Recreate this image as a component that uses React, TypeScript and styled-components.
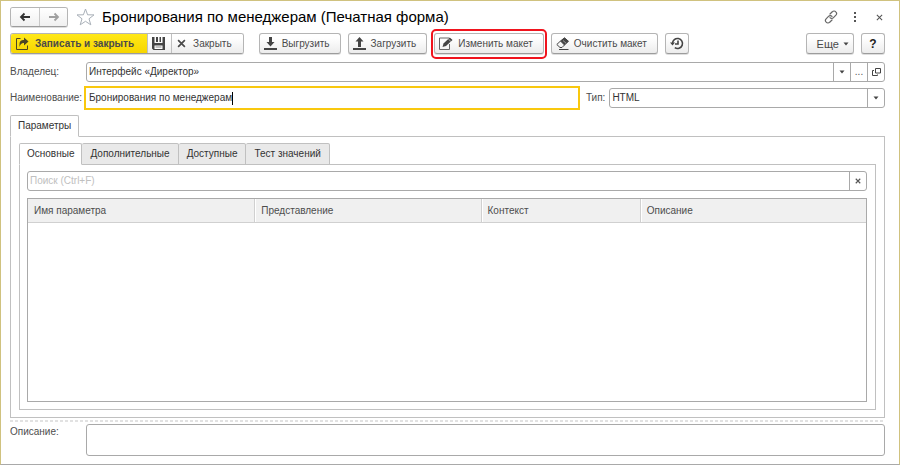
import React from 'react';
import styled, { createGlobalStyle, css } from 'styled-components';

const line = '#a9a9a9';
const soft = '#c0c0c0';

const GlobalStyle = createGlobalStyle`
  *, *::before, *::after { box-sizing: border-box; }
  body { margin: 0; background: #fff; color: #4a4a4a; }
  body, button, input, select, textarea {
    font-family: "Liberation Sans", Arial, sans-serif;
    font-size: 10px;
    line-height: 14px;
  }
  button, input, select, textarea { margin: 0; color: inherit; border-radius: 0; }
`;

const Window = styled.main`
  display: flex;
  flex-direction: column;
  min-height: 100vh;
  padding: 6px 14px 8px 9px;
  border: 1px solid #d0c27f;
  border-bottom-color: ${line};
`;

const TitleBar = styled.header`
  display: flex;
  align-items: center;
  height: 20px;
`;

const Title = styled.h1`
  flex: 1;
  margin: 0 0 0 7px;
  color: #000;
  font-size: 15px;
  font-weight: 400;
  line-height: 20px;
  white-space: nowrap;
`;

const Joined = styled.div`
  display: flex;
  border: 1px solid #b5b5b5;
  border-bottom-color: #9c9c9c;
  border-radius: 3px;
  box-shadow: 0 1px 0 #dedede;
  overflow: hidden;
`;

const NavButton = styled.button<{ $muted?: boolean }>`
  display: flex;
  align-items: center;
  justify-content: center;
  width: 28px;
  height: 18px;
  padding: 0;
  border: 0;
  background: linear-gradient(#fff, #f0f0f0);
  color: ${(p) => (p.$muted ? '#a0a0a0' : '#333')};
  & + & { border-left: 1px solid #c8c8c8; }
`;

const PlainButton = styled.button`
  display: flex;
  align-items: center;
  justify-content: center;
  padding: 0;
  border: 0;
  background: none;
  color: #555;
`;

const WindowActions = styled.div`
  display: flex;
  align-items: center;
  gap: 8px;
  margin-right: -2px;
  ${PlainButton} { width: 16px; height: 16px; }
`;

const Star = styled(PlainButton)`
  margin-left: 8px;
`;

const Toolbar = styled.div`
  display: flex;
  align-items: center;
  gap: 7px;
  height: 21px;
  margin-top: 6px;
`;

const buttonFace = css`
  display: flex;
  align-items: center;
  height: 21px;
  background: linear-gradient(#fff 20%, #ececec);
  white-space: nowrap;
`;

const Button = styled.button<{ $square?: boolean }>`
  ${buttonFace}
  gap: 5px;
  padding: 0 10px 0 4px;
  border: 1px solid #b5b5b5;
  border-bottom-color: #9c9c9c;
  border-radius: 3px;
  box-shadow: 0 1px 0 #dedede;
  ${(p) => p.$square && css`
    justify-content: center;
    width: 24px;
    padding: 0;
  `}
`;

const Segment = styled.button<{ $primary?: boolean; $icon?: boolean }>`
  ${buttonFace}
  height: 19px;
  gap: 7px;
  padding: 0 11px 0 5px;
  border: 0;
  & + & { border-left: 1px solid #c0c0c0; }
  ${(p) => p.$primary && css`
    gap: 6px;
    padding: 0 13px 0 5px;
    background: linear-gradient(#ffe818, #f7d600);
    font-weight: 700;
  `}
  ${(p) => p.$icon && css`
    width: 24px;
    padding: 0 4px;
  `}
`;

const MainGroup = styled(Joined)`
  margin-right: 8px;
`;

const Highlight = styled.div`
  position: relative;
  &::after {
    content: '';
    position: absolute;
    inset: -4px -3px -5px;
    border: 2px solid #f0141e;
    border-radius: 5px;
    pointer-events: none;
  }
`;

const Spacer = styled.div`
  flex: 1;
`;

const MoreButton = styled(Button)`
  gap: 4px;
  padding: 0 4px 0 10px;
  font-size: 11px;
`;

const HelpButton = styled(Button)`
  color: #222;
  font-size: 12px;
  font-weight: 700;
`;

const FormRow = styled.div<{ $top: number }>`
  display: flex;
  align-items: center;
  margin-top: ${(p) => p.$top}px;
`;

const Label = styled.label`
  flex: none;
  width: 76px;
  color: #4d4d4d;
  white-space: nowrap;
`;

const Field = styled.div`
  display: flex;
  flex: 1;
  height: 20px;
  border: 1px solid ${line};
  border-radius: 3px;
  overflow: hidden;
`;

const TextInput = styled.input`
  flex: 1;
  min-width: 0;
  padding: 0 2px;
  border: 0;
  outline: 0;
  background: none;
  color: #333;
  &::placeholder { color: #c0c0c0; opacity: 1; }
`;

const ActiveField = styled.div`
  display: flex;
  align-items: center;
  flex: 495;
  height: 24px;
  margin-left: -2px;
  padding-left: 3px;
  border: 2px solid #f9c80e;
  ${TextInput} {
    flex: none;
    field-sizing: content;
    padding: 0;
  }
`;

const Caret = styled.span`
  width: 1px;
  height: 13px;
  background: #000;
`;

const TypeLabel = styled(Label)`
  width: auto;
  margin: 0 4px 0 6px;
`;

const TypeField = styled(Field)`
  position: relative;
  flex: 277;
`;

const Select = styled.select`
  appearance: none;
  flex: 1;
  min-width: 0;
  padding: 0 2px;
  border: 0;
  outline: 0;
  background: none;
  color: #333;
`;

const FieldButton = styled(PlainButton)`
  width: 17px;
  border-left: 1px solid ${line};
`;

const SelectArrow = styled.span`
  position: absolute;
  inset: 0 0 0 auto;
  display: flex;
  align-items: center;
  justify-content: center;
  width: 17px;
  border-left: 1px solid ${line};
  pointer-events: none;
`;

const Tabs = styled.div`
  display: flex;
  position: relative;
  margin-bottom: -1px;
`;

const Tab = styled.button<{ $active?: boolean }>`
  height: 22px;
  padding: 0 7px;
  border: 1px solid ${soft};
  border-bottom-color: ${(p) => (p.$active ? '#fff' : soft)};
  border-radius: 2px 2px 0 0;
  background: ${(p) => (p.$active ? '#fff' : '#e9e9e9')};
  color: #333;
  white-space: nowrap;
  & + & { border-left: 0; padding: 0 8px; }
`;

const Section = styled.section<{ $top: number }>`
  display: flex;
  flex: 1;
  flex-direction: column;
  margin-top: ${(p) => p.$top}px;
`;

const Panel = styled.div<{ $outer?: boolean }>`
  display: flex;
  flex: 1;
  flex-direction: column;
  padding: ${(p) => (p.$outer ? '0 8px 7px' : '6px 8px 7px 7px')};
  border: 1px solid ${soft};
`;

const SearchField = styled(Field)`
  flex: none;
`;

const TableFrame = styled.div`
  flex: 1;
  min-height: 120px;
  margin-top: 7px;
  border: 1px solid ${line};
`;

const Table = styled.table`
  width: 100%;
  table-layout: fixed;
  border-collapse: separate;
  border-spacing: 0;
`;

const HeadCell = styled.th<{ $share: number }>`
  width: ${(p) => p.$share}%;
  height: 24px;
  padding: 0 6px;
  border-bottom: 1px solid #d0d0d0;
  background: #f0f0f0;
  color: #4d4d4d;
  font-weight: 400;
  text-align: left;
  & + & { border-left: 1px solid #d0d0d0; box-shadow: inset 1px 0 0 #fff; }
`;

const Divider = styled.hr`
  width: 100%;
  height: 2px;
  margin: 2px 0;
  border: 0;
  background: repeating-linear-gradient(90deg, #e2e2e2 0 3px, #fff 3px 5px);
`;

const DescriptionRow = styled.div`
  display: flex;
  ${Label} { padding-top: 1px; }
`;

const TextArea = styled.textarea`
  flex: 1;
  height: 32px;
  padding: 3px;
  border: 1px solid ${line};
  border-radius: 3px;
  outline: 0;
  resize: none;
`;

const Arrow = () => (
  <svg width="6" height="4" viewBox="0 0 6 4" fill="#444" aria-hidden="true"><path d="M.5.5h5L3 3.5z" /></svg>
);

const NavArrow = ({ flip }: { flip?: boolean }) => (
  <svg width="12" height="10" viewBox="0 0 12 10" fill="none" stroke="currentColor" strokeWidth="1.800" aria-hidden="true">
    <path d={flip ? 'M1 5h9M6.500 1.500 10 5 6.500 8.500' : 'M11 5H2M5.500 1.500 2 5l3.500 3.500'} />
  </svg>
);

const Cross = ({ size, weight }: { size: number; weight: number }) => (
  <svg width={size} height={size} viewBox="0 0 8 8" stroke="currentColor" strokeWidth={weight} aria-hidden="true">
    <path d="m1 1 6 6M7 1 1 7" />
  </svg>
);

const StarIcon = () => (
  <svg width="19" height="18" viewBox="0 0 19 18" fill="#fff" stroke="#a9b0b8" aria-hidden="true">
    <path d="m9.500 1 2.100 5.800 6.400.1-5 3.900 1.800 6-5.300-3.500-5.300 3.500 1.800-6-5-3.900 6.400-.1z" />
  </svg>
);

const LinkIcon = () => (
  <svg width="14" height="14" viewBox="0 0 14 14" fill="none" stroke="#666" strokeWidth="1.200" strokeLinecap="round" aria-hidden="true">
    <path d="m6 4 2.300-2.200a2.300 2.300 0 0 1 3.500 0c1 1 1 2.400.1 3.400L9.500 7.600c-1 1-2.600 1-3.500 0M8 10l-2.300 2.200a2.300 2.300 0 0 1-3.500 0c-1-1-1-2.400-.1-3.400l2.400-2.400c1-1 2.600-1 3.500 0" />
  </svg>
);

const DotsIcon = () => (
  <svg width="3" height="10" viewBox="0 0 3 10" fill="#555" aria-hidden="true"><path d="M0 0h2v2H0zM0 4h2v2H0zM0 8h2v2H0z" /></svg>
);

const SaveCloseIcon = () => (
  <svg width="13" height="13" viewBox="0 0 13 13" fill="none" stroke="#4b4524" aria-hidden="true">
    <path d="M4.500 1.500H.5v11h11V8.500" />
    <path d="M3.500 10V7C3.500 4.500 5 3 7.500 3H8V.5L12.500 4.500 8 8.500V6H7.500C5.500 6 4.500 7 3.500 10z" fill="#4b4524" stroke="none" />
  </svg>
);

const DiskIcon = () => (
  <svg width="13" height="13" viewBox="0 0 13 13" aria-hidden="true">
    <path d="M0 0h2.500v6h8V0H13v13H1.500L0 11.500z" fill="#444" />
    <path d="M4 0h2v5H4zM7.500 0h1.500v5H7.500z" fill="#444" />
    <path d="M2.500 8.500h8V12h-8z" fill="#fff" />
    <path d="M3.500 9.500h6v1h-6z" fill="#888" />
  </svg>
);

const TransferIcon = ({ up }: { up?: boolean }) => (
  <svg width="13" height="13" viewBox="0 0 13 13" fill="#444" aria-hidden="true">
    <path d="M0 11h13v2H0z" />
    <path d={up ? 'M6.500 0 10.500 4.500H8V10H5V4.500H2.500z' : 'M5 0h3v5h2.500L6.500 9.500 2.500 5H5z'} />
  </svg>
);

const EditIcon = () => (
  <svg width="14" height="13" viewBox="0 0 14 13" aria-hidden="true">
    <path d="M10 1H.5v11.500h10V7" fill="none" stroke="#666" />
    <path d="m3.500 10 1-3.500L10.800.5 13.500 3 7 9z" fill="#444" />
    <path d="m9.300 2 2.600 2.400" stroke="#fff" strokeWidth=".6" />
  </svg>
);

const EraserIcon = () => (
  <svg width="13" height="13" viewBox="0 0 13 13" fill="none" stroke="#444" aria-hidden="true">
    <path d="M4.500 4 8.500.8l4 3.500L8.500 8z" fill="#444" />
    <path d="M4.500 4 .8 7.500 4 10.500h2L8.500 8M3 12.500h9.500" />
    <path d="m7 3.500 3 2.700" stroke="#fff" strokeWidth=".5" />
  </svg>
);

const HistoryIcon = () => (
  <svg width="14" height="13" viewBox="0 0 14 13" fill="none" stroke="#444" strokeWidth="1.600" aria-hidden="true">
    <path d="M2.500 6.500a5 5 0 1 1 2.300 4.200M8 3.500V7H5" />
    <path d="M0 5.500h5L2.500 8.500z" fill="#444" stroke="none" />
  </svg>
);

const OpenIcon = () => (
  <svg width="9" height="8" viewBox="0 0 9 8" fill="none" stroke="#444" aria-hidden="true">
    <path d="M3.500.5h5v4.500h-5zM2 2.500H.5v5h5V6.500" />
  </svg>
);

const columns = [
  { name: 'Имя параметра', share: 27 },
  { name: 'Представление', share: 27 },
  { name: 'Контекст', share: 19 },
  { name: 'Описание', share: 27 },
];

const innerTabs = ['Основные', 'Дополнительные', 'Доступные', 'Тест значений'];

export default function App() {
  return (
    <>
      <GlobalStyle />
      <Window>
        <TitleBar>
          <Joined>
            <NavButton aria-label="Назад"><NavArrow /></NavButton>
            <NavButton $muted aria-label="Вперед"><NavArrow flip /></NavButton>
          </Joined>
          <Star aria-label="В избранное"><StarIcon /></Star>
          <Title>Бронирования по менеджерам (Печатная форма)</Title>
          <WindowActions>
            <PlainButton aria-label="Ссылка"><LinkIcon /></PlainButton>
            <PlainButton aria-label="Меню"><DotsIcon /></PlainButton>
            <PlainButton aria-label="Закрыть окно"><Cross size={7} weight={1.2} /></PlainButton>
          </WindowActions>
        </TitleBar>

        <Toolbar>
          <MainGroup>
            <Segment $primary><SaveCloseIcon />Записать и закрыть</Segment>
            <Segment $icon aria-label="Записать"><DiskIcon /></Segment>
            <Segment><Cross size={9} weight={1.5} />Закрыть</Segment>
          </MainGroup>
          <Button><TransferIcon />Выгрузить</Button>
          <Button><TransferIcon up />Загрузить</Button>
          <Highlight><Button><EditIcon />Изменить макет</Button></Highlight>
          <Button><EraserIcon />Очистить макет</Button>
          <Button $square aria-label="История"><HistoryIcon /></Button>
          <Spacer />
          <MoreButton>Еще<Arrow /></MoreButton>
          <HelpButton $square>?</HelpButton>
        </Toolbar>

        <FormRow $top={8}>
          <Label htmlFor="owner">Владелец:</Label>
          <Field>
            <TextInput id="owner" defaultValue="Интерфейс «Директор»" />
            <FieldButton aria-label="Список"><Arrow /></FieldButton>
            <FieldButton aria-label="Выбрать">...</FieldButton>
            <FieldButton aria-label="Открыть"><OpenIcon /></FieldButton>
          </Field>
        </FormRow>

        <FormRow $top={4}>
          <Label htmlFor="name">Наименование:</Label>
          <ActiveField>
            <TextInput id="name" defaultValue="Бронирования по менеджерам" />
            <Caret />
          </ActiveField>
          <TypeLabel htmlFor="type">Тип:</TypeLabel>
          <TypeField>
            <Select id="type" defaultValue="HTML"><option>HTML</option></Select>
            <SelectArrow><Arrow /></SelectArrow>
          </TypeField>
        </FormRow>

        <Section $top={5}>
          <Tabs role="tablist">
            <Tab role="tab" aria-selected $active>Параметры</Tab>
          </Tabs>
          <Panel $outer>
            <Section $top={6}>
              <Tabs role="tablist">
                {innerTabs.map((name, i) => (
                  <Tab key={name} role="tab" aria-selected={i === 0} $active={i === 0}>{name}</Tab>
                ))}
              </Tabs>
              <Panel>
                <SearchField>
                  <TextInput type="text" aria-label="Поиск" placeholder="Поиск (Ctrl+F)" />
                  <FieldButton aria-label="Очистить"><Cross size={6} weight={1.5} /></FieldButton>
                </SearchField>
                <TableFrame>
                  <Table>
                    <thead>
                      <tr>
                        {columns.map((c) => (
                          <HeadCell key={c.name} $share={c.share} scope="col">{c.name}</HeadCell>
                        ))}
                      </tr>
                    </thead>
                  </Table>
                </TableFrame>
              </Panel>
            </Section>
          </Panel>
        </Section>

        <Divider />
        <DescriptionRow>
          <Label htmlFor="description">Описание:</Label>
          <TextArea id="description" />
        </DescriptionRow>
      </Window>
    </>
  );
}
